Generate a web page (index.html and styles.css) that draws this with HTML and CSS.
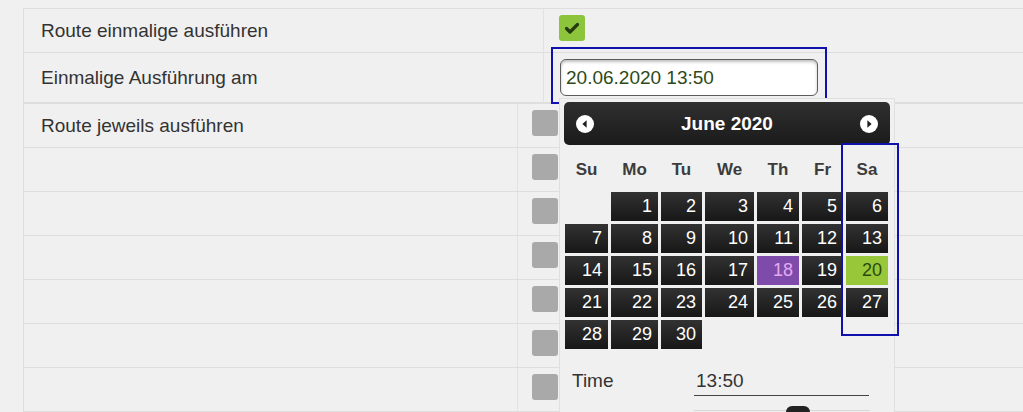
FILE: index.html
```html
<!DOCTYPE html>
<html lang="de">
<head>
<meta charset="utf-8">
<title>Route</title>
<link rel="stylesheet" href="styles.css">
</head>
<body>
<div class="page">
  <div class="form form-top">
    <div class="row">
      <div class="label">Route einmalige ausführen</div>
      <div class="value"><span class="cb cb-on"><svg width="26" height="26" viewBox="0 0 26 26"><path d="M7.5 13.5 L11 17 L18.5 9.5" fill="none" stroke="#263a10" stroke-width="3.2" stroke-linecap="round" stroke-linejoin="round"/></svg></span></div>
    </div>
    <div class="row row-tall">
      <div class="label">Einmalige Ausführung am</div>
      <div class="value"><input class="date-input" type="text" value="20.06.2020 13:50"></div>
    </div>
  </div>
  <div class="form form-bottom">
    <div class="row"><div class="label">Route jeweils ausführen</div><div class="value"><span class="cb"></span></div></div>
    <div class="row"><div class="label"></div><div class="value"><span class="cb"></span></div></div>
    <div class="row"><div class="label"></div><div class="value"><span class="cb"></span></div></div>
    <div class="row"><div class="label"></div><div class="value"><span class="cb"></span></div></div>
    <div class="row"><div class="label"></div><div class="value"><span class="cb"></span></div></div>
    <div class="row"><div class="label"></div><div class="value"><span class="cb"></span></div></div>
    <div class="row"><div class="label"></div><div class="value"><span class="cb"></span></div></div>
  </div>

  <div class="focus focus-input"></div>

  <div class="dp">
    <div class="dp-header">
      <span class="dp-nav"><svg width="18" height="18" viewBox="0 0 18 18"><circle cx="9" cy="9" r="9" fill="#fff"/><path d="M10.6 5.3 L6.4 9 L10.6 12.7 Z" fill="#1e1e1e"/></svg></span>
      <span class="dp-title">June 2020</span>
      <span class="dp-nav"><svg width="18" height="18" viewBox="0 0 18 18"><circle cx="9" cy="9" r="9" fill="#fff"/><path d="M7.4 5.3 L11.6 9 L7.4 12.7 Z" fill="#1e1e1e"/></svg></span>
    </div>
    <div class="dp-grid">
      <span class="dow">Su</span><span class="dow">Mo</span><span class="dow">Tu</span><span class="dow">We</span><span class="dow">Th</span><span class="dow">Fr</span><span class="dow">Sa</span>
      <span class="blank"></span>
      <span class="day">1</span><span class="day">2</span><span class="day">3</span><span class="day">4</span><span class="day">5</span><span class="day">6</span>
      <span class="day">7</span><span class="day">8</span><span class="day">9</span><span class="day">10</span><span class="day">11</span><span class="day">12</span><span class="day">13</span>
      <span class="day">14</span><span class="day">15</span><span class="day">16</span><span class="day">17</span><span class="day today">18</span><span class="day">19</span><span class="day selected">20</span>
      <span class="day">21</span><span class="day">22</span><span class="day">23</span><span class="day">24</span><span class="day">25</span><span class="day">26</span><span class="day">27</span>
      <span class="day">28</span><span class="day">29</span><span class="day">30</span>
    </div>
    <div class="dp-time">
      <span class="time-label">Time</span>
      <span class="time-value">13:50</span>
    </div>
    <div class="dp-slider"><span class="slider-handle"></span></div>
  </div>

  <div class="focus focus-col"></div>
</div>
</body>
</html>
```

FILE: styles.css
```css
html, body {
  margin: 0;
  padding: 0;
  background: #f0f0f0;
  overflow: hidden;
}

.page {
  position: relative;
  height: 412px;
  overflow: hidden;
  padding: 8px 0 0 23px;
  box-sizing: border-box;
  font-family: "Liberation Sans", Arial, sans-serif;
  color: #333;
}

.form {
  border-left: 1px solid #dedede;
  border-top: 1px solid #dedede;
}

.row {
  display: grid;
  height: 44px;
  box-sizing: border-box;
  border-bottom: 1px solid #dedede;
}

.form-top .row {
  grid-template-columns: 520px 1fr;
}

.form-top .row-tall {
  height: 50px;
}

.form-bottom .row {
  grid-template-columns: 494px 1fr;
}

.label {
  display: flex;
  align-items: center;
  padding-left: 17px;
  font-size: 19px;
  color: #333;
  border-right: 1px solid #e2e2e2;
}

.value {
  display: flex;
  align-items: center;
}

.form-top .value {
  padding-left: 15px;
}

.form-bottom .value {
  padding-left: 14px;
}

.cb {
  display: block;
  width: 26px;
  height: 26px;
  border-radius: 3px;
  background: #a9a9a9;
  margin-top: -5px;
}

.cb-on {
  background: #8cc43c;
  margin-top: -6px;
}

.cb svg {
  display: block;
}

.date-input {
  width: 258px;
  height: 37px;
  box-sizing: border-box;
  margin: 0 0 0 1px;
  padding: 0 0 0 5px;
  border: 1px solid #5c5c5c;
  border-radius: 6px;
  background: #fff;
  box-shadow: inset 0 2px 3px rgba(0, 0, 0, 0.25);
  font-family: "Liberation Sans", Arial, sans-serif;
  font-size: 19px;
  color: #2e4a18;
  outline: none;
}

.focus {
  position: absolute;
  border: 2px solid #1010ae;
  box-sizing: border-box;
}

.focus-input {
  left: 551px;
  top: 47px;
  width: 276px;
  height: 57px;
}

.focus-col {
  left: 841px;
  top: 143px;
  width: 58px;
  height: 193px;
}

.dp {
  position: absolute;
  left: 559px;
  top: 98px;
  width: 336px;
  height: 330px;
  box-sizing: border-box;
  padding: 3px 4px 0 4px;
  background: #f0f0f0;
  border: 1px solid #e0e0e0;
}

.dp-header {
  display: flex;
  align-items: center;
  justify-content: space-between;
  height: 43px;
  padding: 0 12px 0 12px;
  border-radius: 5px;
  background: linear-gradient(#2f2f2f, #1b1b1b);
}

.dp-nav svg {
  display: block;
}

.dp-title {
  color: #fff;
  font-weight: bold;
  font-size: 19px;
}

.dp-grid {
  display: grid;
  grid-template-columns: 43px 47px 41px 49px 42px 41px 42px;
  grid-template-rows: 44px repeat(5, 29px);
  column-gap: 3px;
  row-gap: 3px;
  margin-left: 1px;
}

.dow {
  display: flex;
  align-items: center;
  justify-content: center;
  padding-top: 5px;
  font-weight: bold;
  font-size: 17px;
  color: #3c3c3c;
}

.day {
  display: flex;
  align-items: center;
  justify-content: flex-end;
  padding-right: 6px;
  font-size: 18px;
  color: #fff;
  background: linear-gradient(#323232, #171717);
}

.day.today {
  background: #7f4bab;
  color: #e6a9f2;
}

.day.selected {
  background: #98c83a;
  color: #2a4a0c;
}

.dp-time {
  display: flex;
  margin-top: 21px;
  padding-left: 8px;
  font-size: 19px;
  line-height: 22px;
}

.time-label {
  width: 122px;
  color: #333;
}

.time-value {
  width: 175px;
  padding: 0 0 3px 2px;
  box-sizing: border-box;
  border-bottom: 1px solid #444;
  color: #333;
}

.dp-slider {
  position: relative;
  margin: 14px 0 0 130px;
  width: 176px;
  height: 20px;
  border-top: 1px solid #d8d8d8;
}

.slider-handle {
  position: absolute;
  left: 92px;
  top: -5px;
  width: 24px;
  height: 20px;
  border-radius: 6px;
  background: #222;
}
```
